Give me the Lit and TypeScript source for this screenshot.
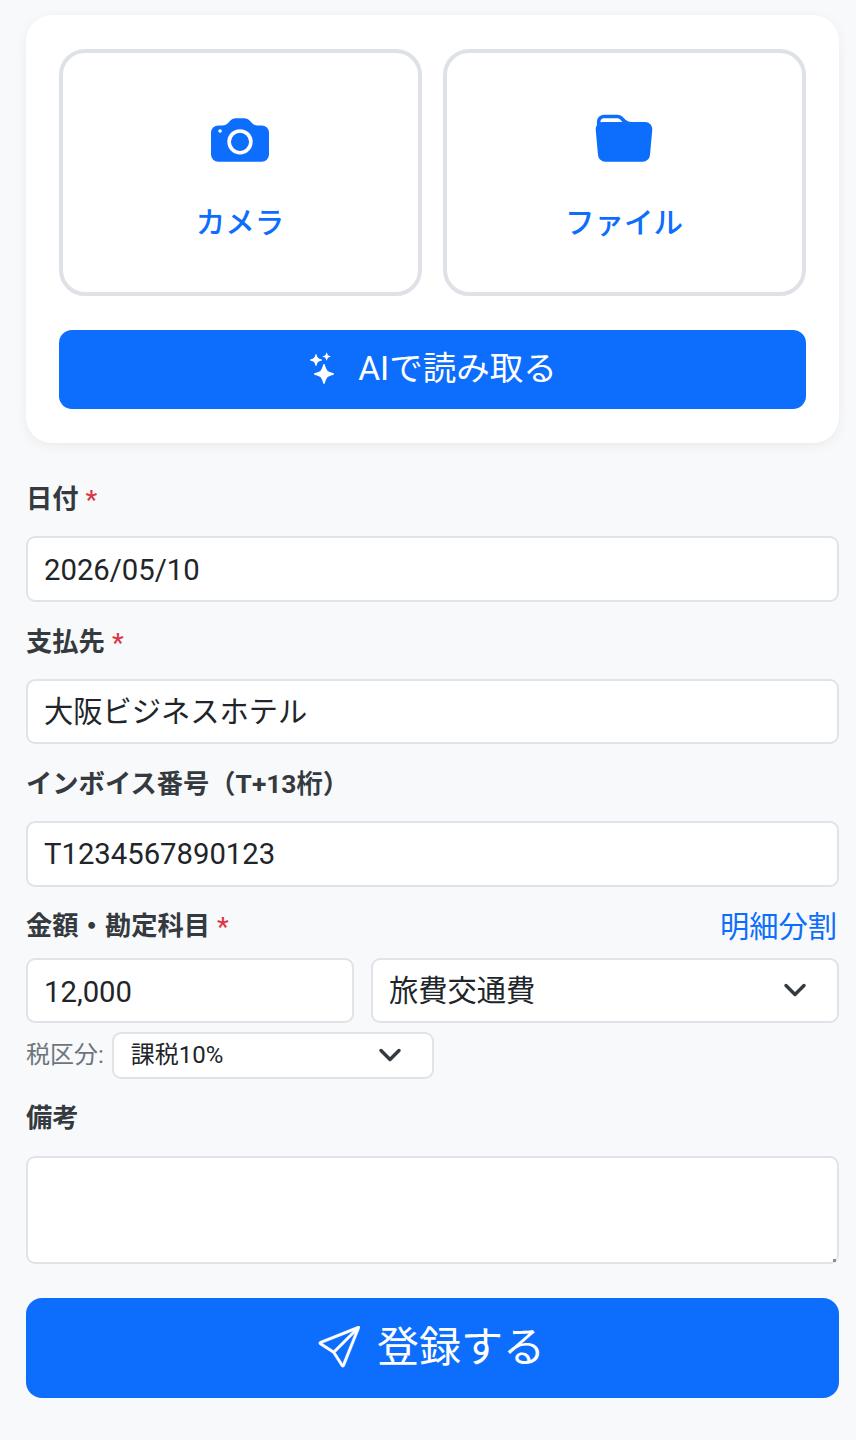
import { LitElement, html, css } from "lit";
import { customElement } from "lit/decorators.js";

const chevron = html`<svg class="chev" viewBox="0 0 16 16" aria-hidden="true"><path fill="none" stroke="#343a40" stroke-linecap="round" stroke-linejoin="round" stroke-width="2.3" d="m2 5 6 6 6-6"/></svg>`;

@customElement("app-root")
export class AppRoot extends LitElement {
  static styles = css`
    :host {
      display: block;
      min-height: 1440px;
      box-sizing: border-box;
      padding: 15px 17px 42px 26px;
      background: #f8f9fa;
      color: #212529;
      font-family: Roboto, "Noto Sans CJK JP", sans-serif;
    }
    * { box-sizing: border-box; }
    .card {
      background: #fff;
      border-radius: 26px;
      padding: 34px 33px;
      height: 428px;
      margin-bottom: 34px;
      box-shadow: 0 3px 12px rgba(0, 0, 0, 0.06);
    }
    .pick { display: grid; grid-template-columns: 363px 1fr; gap: 21px; margin-bottom: 34px; }
    .tile {
      height: 247px;
      border: 4px solid #dee2e6;
      border-radius: 26px;
      color: #0d6efd;
      font-size: 29.5px;
      font-weight: 500;
      display: flex;
      flex-direction: column;
      align-items: center;
      padding-top: 58px;
    }
    .tile svg { width: 58px; height: 58px; fill: #0d6efd; margin-bottom: 32px; margin-right: 2px; }
    .tile span { line-height: 44px; margin-right: 1px; }
    .btn {
      background: #0d6efd;
      color: #fff;
      display: flex;
      align-items: center;
      justify-content: center;
    }
    .btn svg { fill: #fff; }
    .btn span { padding-bottom: 8px; }
    .ai { height: 79px; border-radius: 13px; font-size: 33.5px; gap: 18px; }
    .ai svg { width: 32px; height: 36px; margin-bottom: 3px; }
    .label {
      display: flex;
      justify-content: space-between;
      align-items: center;
      height: 39px;
      font-size: 26.3px;
      font-weight: 700;
      color: #343a40;
      margin-bottom: 20px;
    }
    .label.up > span:first-child { padding-bottom: 2px; }
    .req { color: #dc3545; margin-left: 7px; font-weight: 500; }
    .link { color: #0d6efd; font-size: 29.25px; font-weight: 400; padding-right: 2px; }
    .field { margin-bottom: 18px; }
    .ctl {
      display: block;
      width: 100%;
      height: 65.5px;
      border: 2px solid #e0e3e7;
      border-radius: 9px;
      background: #fff;
      padding: 0 16px;
      font: 400 29.25px Roboto, "Noto Sans CJK JP", sans-serif;
      color: #212529;
      outline: none;
    }
    .ctl.jp { padding-bottom: 4px; }
    .ctl.digits { padding-top: 2px; }
    .ctl.amount { padding-top: 4px; }
    .sel { display: flex; align-items: center; justify-content: space-between; padding-right: 30px; }
    .sel span { padding-bottom: 5px; }
    .chev { width: 24px; height: 24px; flex: none; }
    .pair { display: grid; grid-template-columns: 328px 1fr; gap: 17px; margin-top: -6px; }
    .pair > .ctl { height: 65px; }
    .tax {
      display: flex;
      align-items: center;
      gap: 8px;
      margin-top: 9px;
      margin-bottom: 17px;
      font-size: 24px;
      color: #6c757d;
    }
    .tax > span { padding-bottom: 5px; }
    .tax .ctl {
      width: 322px;
      height: 47px;
      font-size: 24px;
      padding: 0 30px 0 17px;
    }
    .tax .sel span { padding-bottom: 5px; color: #212529; }
    .note { position: relative; padding-top: 1px; }
    textarea.ctl { height: 108px; resize: none; }
    .grip {
      position: absolute;
      right: 3px;
      bottom: 2px;
      width: 3px;
      height: 3px;
      background: #8a8f94;
    }
    .submit { height: 100px; border-radius: 16px; font-size: 42px; gap: 17px; margin-top: 34px; padding-right: 2px; }
    .submit svg { width: 42px; height: 42px; margin-bottom: 2px; stroke: #fff; stroke-width: 0.15; }
  `;

  render() {
    return html`
      <div class="card">
        <div class="pick">
          <div class="tile">
            <svg viewBox="0 0 16 16"><path d="M10.5 8.5a2.5 2.5 0 1 1-5 0 2.5 2.5 0 0 1 5 0"/><path d="M2 4a2 2 0 0 0-2 2v6a2 2 0 0 0 2 2h12a2 2 0 0 0 2-2V6a2 2 0 0 0-2-2h-1.172a2 2 0 0 1-1.414-.586l-.828-.828A2 2 0 0 0 9.172 2H6.828a2 2 0 0 0-1.414.586l-.828.828A2 2 0 0 1 3.172 4zm.5 2a.5.5 0 1 1 0-1 .5.5 0 0 1 0 1m9 2.5a3.5 3.5 0 1 1-7 0 3.5 3.5 0 0 1 7 0"/></svg>
            <span>カメラ</span>
          </div>
          <div class="tile">
            <svg viewBox="0 0 16 16"><path d="M9.828 3h3.982a2 2 0 0 1 1.992 2.181l-.637 7A2 2 0 0 1 13.174 14H2.825a2 2 0 0 1-1.991-1.819l-.637-7a2 2 0 0 1 .342-1.31L.5 3a2 2 0 0 1 2-2h3.672a2 2 0 0 1 1.414.586l.828.828A2 2 0 0 0 9.828 3m-8.322.12q.322-.119.684-.12h5.396l-.707-.707A1 1 0 0 0 6.172 2H2.5a1 1 0 0 0-1 .981z"/></svg>
            <span>ファイル</span>
          </div>
        </div>
        <div class="btn ai">
          <svg viewBox="0 0 16 16"><path d="M7.657 6.247c.11-.33.576-.33.686 0l.645 1.937a2.89 2.89 0 0 0 1.829 1.828l1.936.645c.33.11.33.576 0 .686l-1.937.645a2.89 2.89 0 0 0-1.828 1.829l-.645 1.936a.361.361 0 0 1-.686 0l-.645-1.937a2.89 2.89 0 0 0-1.828-1.828l-1.937-.645a.361.361 0 0 1 0-.686l1.937-.645a2.89 2.89 0 0 0 1.828-1.828zM3.794 1.148a.217.217 0 0 1 .412 0l.387 1.162c.173.518.579.924 1.097 1.097l1.162.387a.217.217 0 0 1 0 .412l-1.162.387A1.73 1.73 0 0 0 4.593 5.69l-.387 1.162a.217.217 0 0 1-.412 0L3.407 5.69A1.73 1.73 0 0 0 2.31 4.593l-1.162-.387a.217.217 0 0 1 0-.412l1.162-.387A1.73 1.73 0 0 0 3.407 2.31zM9.182.37a.145.145 0 0 1 .275 0l.258.774c.115.346.386.617.732.732l.774.258a.145.145 0 0 1 0 .275l-.774.258a1.16 1.16 0 0 0-.732.732l-.258.774a.145.145 0 0 1-.275 0l-.258-.774a1.16 1.16 0 0 0-.732-.732l-.774-.258a.145.145 0 0 1 0-.275l.774-.258c.346-.115.617-.386.732-.732z"/></svg>
          <span>AIで読み取る</span>
        </div>
      </div>

      <div class="field">
        <div class="label"><span>日付<span class="req">*</span></span></div>
        <input class="ctl digits" .value=${"2026/05/10"} />
      </div>
      <div class="field">
        <div class="label"><span>支払先<span class="req">*</span></span></div>
        <input class="ctl jp" .value=${"大阪ビジネスホテル"} />
      </div>
      <div class="field">
        <div class="label"><span>インボイス番号（T+13桁）</span></div>
        <input class="ctl" .value=${"T1234567890123"} />
      </div>
      <div class="label up">
        <span>金額・勘定科目<span class="req">*</span></span>
        <span class="link">明細分割</span>
      </div>
      <div class="pair">
        <input class="ctl amount" .value=${"12,000"} />
        <div class="ctl sel"><span>旅費交通費</span>${chevron}</div>
      </div>
      <div class="tax">
        <span>税区分:</span>
        <div class="ctl sel"><span>課税10%</span>${chevron}</div>
      </div>
      <div class="label"><span>備考</span></div>
      <div class="note">
        <textarea class="ctl"></textarea>
        <span class="grip"></span>
      </div>
      <div class="btn submit">
        <svg viewBox="0 0 16 16"><path d="M15.854.146a.5.5 0 0 1 .11.54l-5.819 14.547a.75.75 0 0 1-1.329.124l-3.178-4.995L.643 7.184a.75.75 0 0 1 .124-1.33L15.314.037a.5.5 0 0 1 .54.11ZM6.636 10.07l2.761 4.338L14.13 2.576zm6.787-8.201L1.591 6.602l4.339 2.76z"/></svg>
        <span>登録する</span>
      </div>
    `;
  }
}
